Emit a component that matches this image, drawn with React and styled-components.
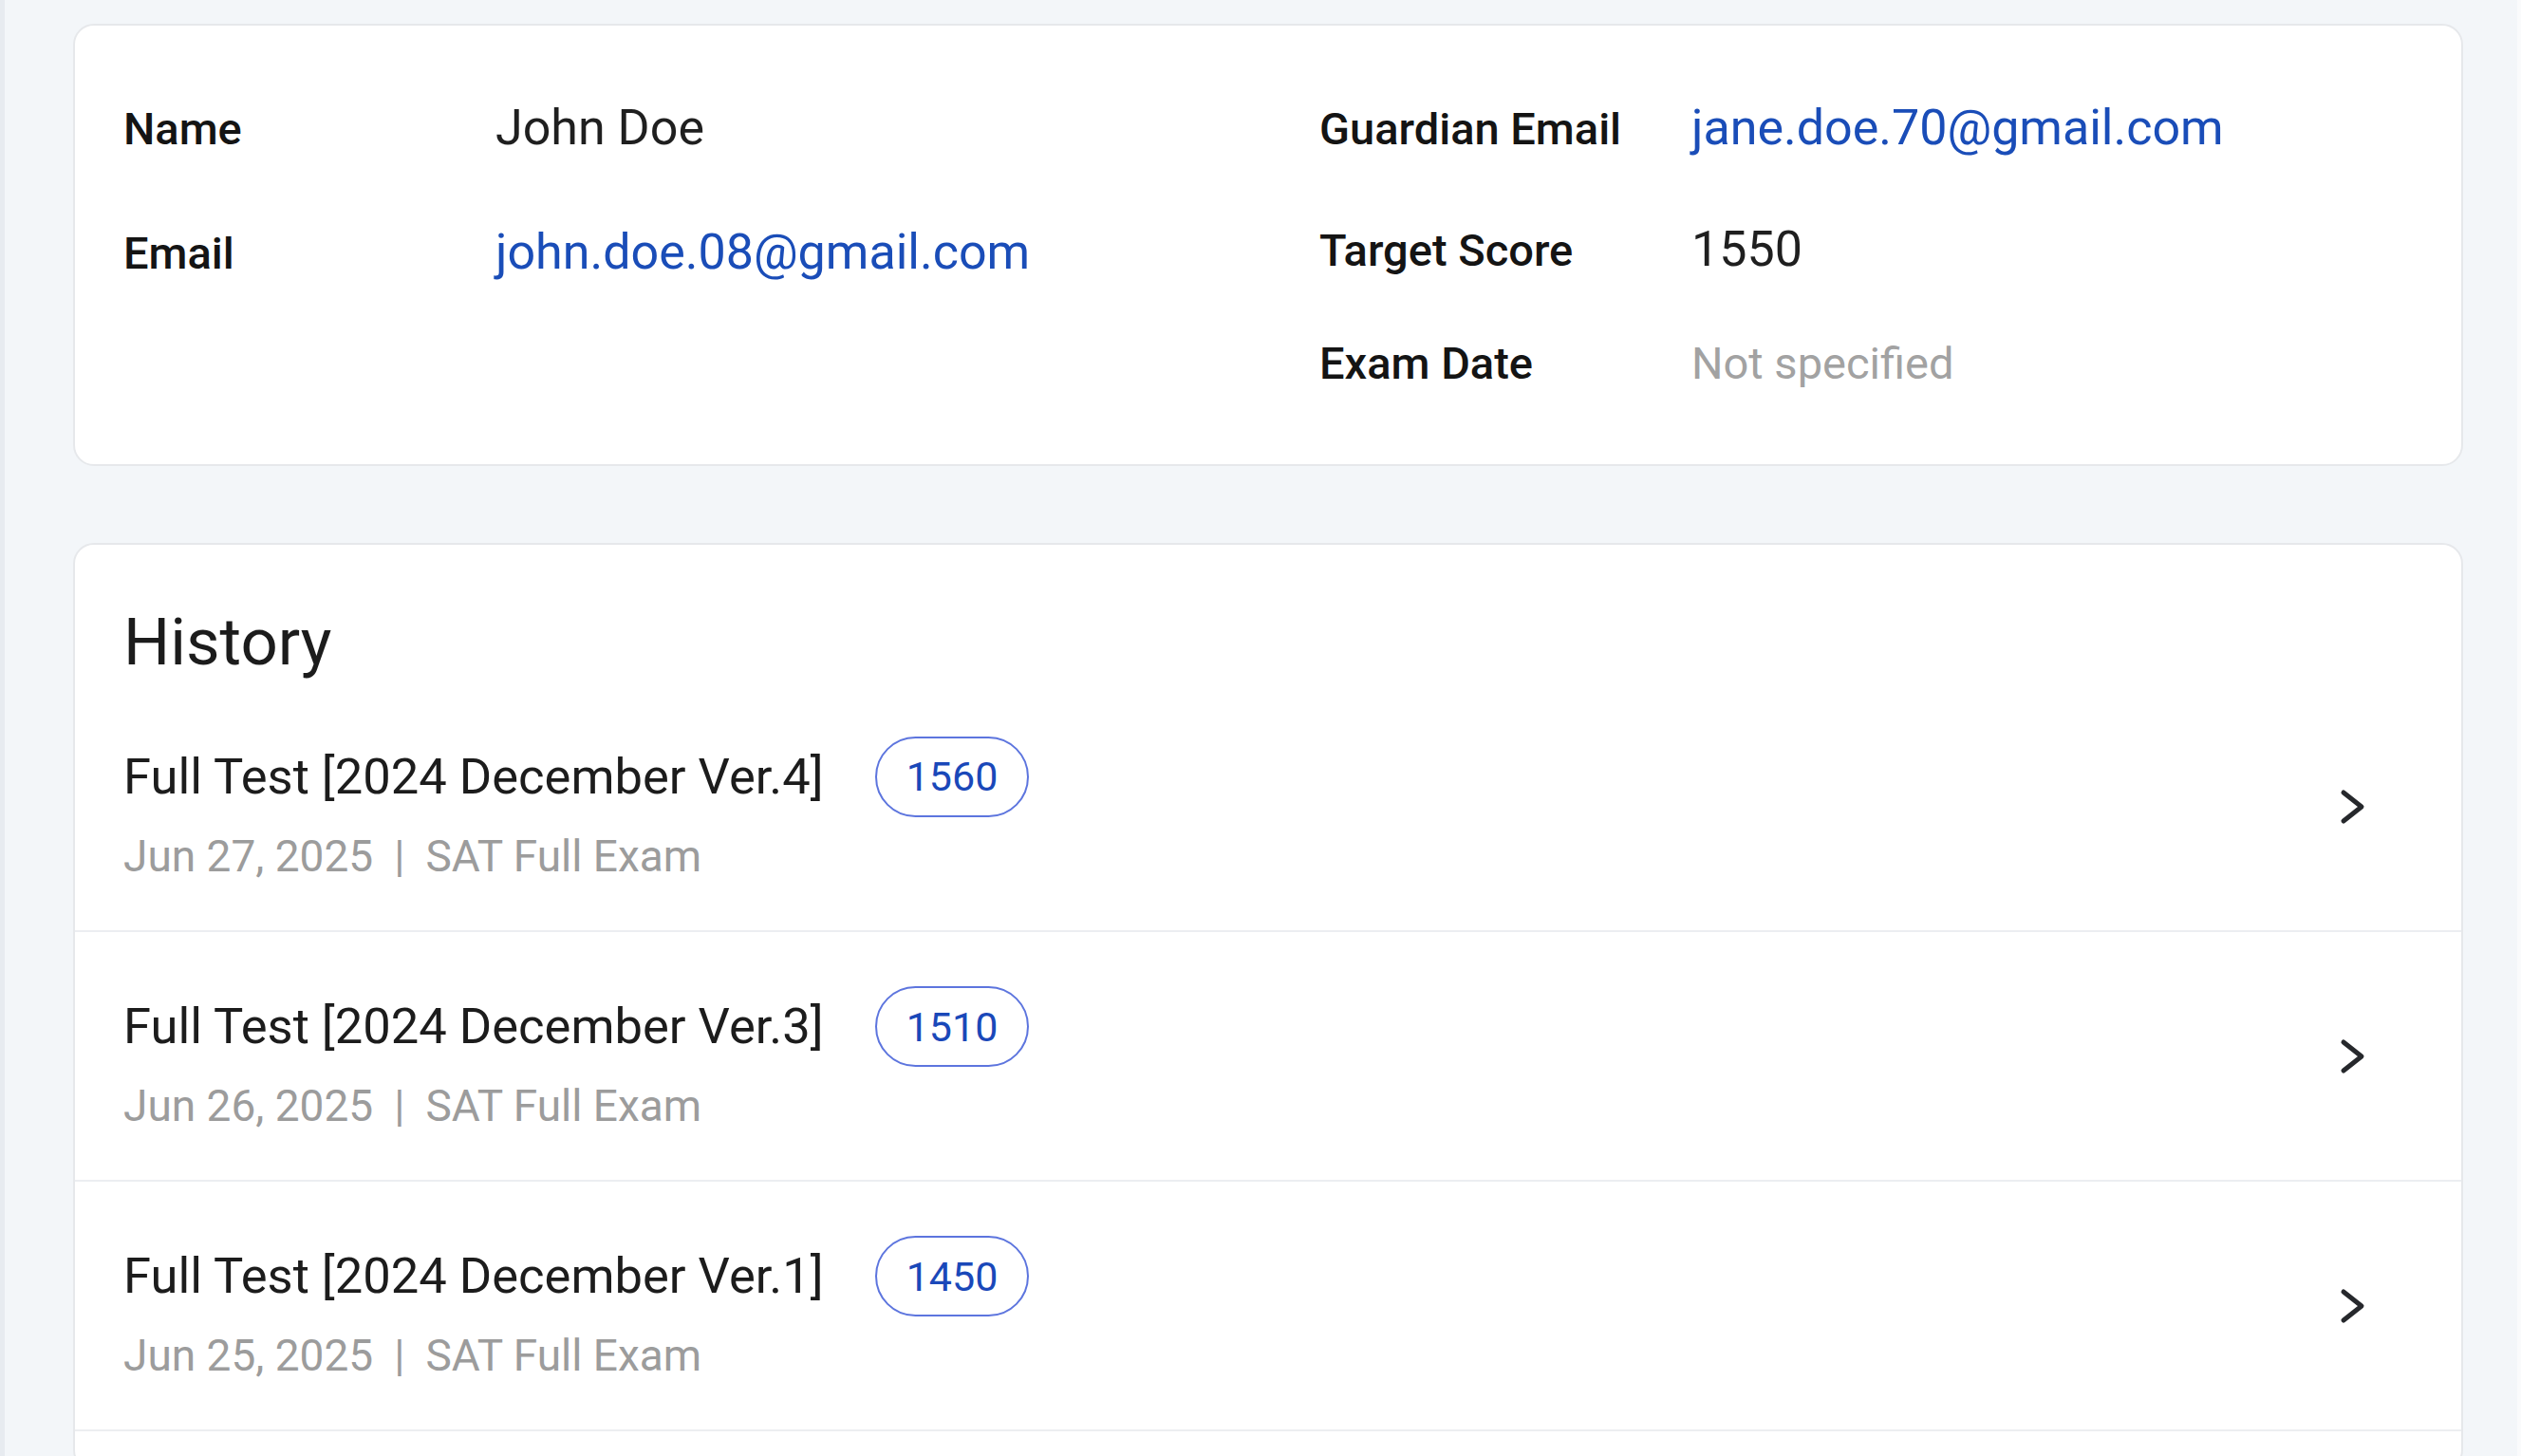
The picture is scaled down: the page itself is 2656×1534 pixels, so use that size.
import React from 'react';
import styled, { createGlobalStyle } from 'styled-components';

const GlobalStyle = createGlobalStyle`
  body {
    margin: 0;
    background: #f3f6f9;
    font-family: Roboto, "Liberation Sans", sans-serif;
    color: #1c1c1c;
  }
`;

const Page = styled.main`
  min-height: 100vh;
  box-sizing: border-box;
  border-left: 5px solid #e7ebf0;
  border-right: 4px solid #fafbfc;
  padding: 25px 57px 0 72px;
  display: flex;
  flex-direction: column;
  gap: 81px;
`;

const Card = styled.section`
  background: #fff;
  border: 2px solid #e6e8eb;
  border-radius: 22px;
`;

const InfoCard = styled(Card)`
  display: grid;
  grid-template-columns: 1fr 1fr;
  align-items: start;
  column-gap: 108px;
  padding: 69px 51px 76px;
`;

const InfoColumn = styled.div`
  display: flex;
  flex-direction: column;
  gap: ${p => p.$gap || 50}px;
`;

const InfoRow = styled.div`
  display: grid;
  grid-template-columns: 392px 1fr;
  align-items: baseline;
`;

const Label = styled.span`
  font-size: 47px;
  font-weight: 500;
  line-height: 1.2;
  color: #141414;
`;

const Value = styled.span`
  font-size: ${p => (p.$muted ? '47px' : '52px')};
  line-height: ${p => (p.$muted ? 1.3 : 1.5)};
  color: ${p => (p.$muted ? '#a2a2a2' : '#1f1f1f')};
`;

const LinkValue = styled.a`
  font-size: 52px;
  line-height: 1.5;
  color: #1a4db8;
  text-decoration: none;
`;

const HistoryCard = styled(Card)`
  padding-bottom: 40px;
`;

const HistoryTitle = styled.h2`
  margin: 0;
  padding: 62px 51px 0;
  font-size: 69px;
  font-weight: 400;
  line-height: 1.2;
  color: #1c1c1c;
`;

const HistoryList = styled.ul`
  list-style: none;
  margin: 0;
  padding: 0;
`;

const HistoryItem = styled.li`
  display: flex;
  align-items: center;
  justify-content: space-between;
  padding: 57px 51px 50px;
  border-bottom: 2px solid #eceef1;
`;

const ItemMain = styled.div`
  display: flex;
  flex-direction: column;
  gap: 14px;
`;

const TitleLine = styled.div`
  display: flex;
  align-items: center;
  gap: 54px;
`;

const TestName = styled.span`
  font-size: 52.5px;
  line-height: 1.4;
  color: #1c1c1c;
`;

const ScoreBadge = styled.span`
  display: inline-flex;
  align-items: center;
  box-sizing: border-box;
  height: 85px;
  padding: 0 31px;
  border: 2px solid #5d75de;
  border-radius: 999px;
  font-size: 43px;
  color: #1a48b9;
`;

const Meta = styled.div`
  font-size: 46px;
  line-height: 1.2;
  color: #9c9c9c;
`;

const Separator = styled.span`
  margin: 0 22px;
`;

const Chevron = styled.svg`
  width: 30px;
  height: 42px;
  margin: 0 48px 6px 0;
  flex-shrink: 0;
`;

const history = [
  { name: 'Full Test [2024 December Ver.4]', score: 1560, date: 'Jun 27, 2025', type: 'SAT Full Exam' },
  { name: 'Full Test [2024 December Ver.3]', score: 1510, date: 'Jun 26, 2025', type: 'SAT Full Exam' },
  { name: 'Full Test [2024 December Ver.1]', score: 1450, date: 'Jun 25, 2025', type: 'SAT Full Exam' },
];

const ChevronIcon = () => (
  <Chevron viewBox="0 0 30 42" fill="none">
    <polyline
      points="5,6 24,21 5,36"
      stroke="#26282c"
      strokeWidth="5"
      strokeLinecap="round"
      strokeLinejoin="round"
    />
  </Chevron>
);

export default function App() {
  return (
    <>
      <GlobalStyle />
      <Page>
        <InfoCard>
          <InfoColumn $gap={53}>
            <InfoRow>
              <Label>Name</Label>
              <Value>John Doe</Value>
            </InfoRow>
            <InfoRow>
              <Label>Email</Label>
              <LinkValue href="mailto:john.doe.08@gmail.com">john.doe.08@gmail.com</LinkValue>
            </InfoRow>
          </InfoColumn>
          <InfoColumn>
            <InfoRow>
              <Label>Guardian Email</Label>
              <LinkValue href="mailto:jane.doe.70@gmail.com">jane.doe.70@gmail.com</LinkValue>
            </InfoRow>
            <InfoRow>
              <Label>Target Score</Label>
              <Value>1550</Value>
            </InfoRow>
            <InfoRow>
              <Label>Exam Date</Label>
              <Value $muted>Not specified</Value>
            </InfoRow>
          </InfoColumn>
        </InfoCard>

        <HistoryCard>
          <HistoryTitle>History</HistoryTitle>
          <HistoryList>
            {history.map(item => (
              <HistoryItem key={item.name}>
                <ItemMain>
                  <TitleLine>
                    <TestName>{item.name}</TestName>
                    <ScoreBadge>{item.score}</ScoreBadge>
                  </TitleLine>
                  <Meta>
                    {item.date}
                    <Separator>|</Separator>
                    {item.type}
                  </Meta>
                </ItemMain>
                <ChevronIcon />
              </HistoryItem>
            ))}
          </HistoryList>
        </HistoryCard>
      </Page>
    </>
  );
}
